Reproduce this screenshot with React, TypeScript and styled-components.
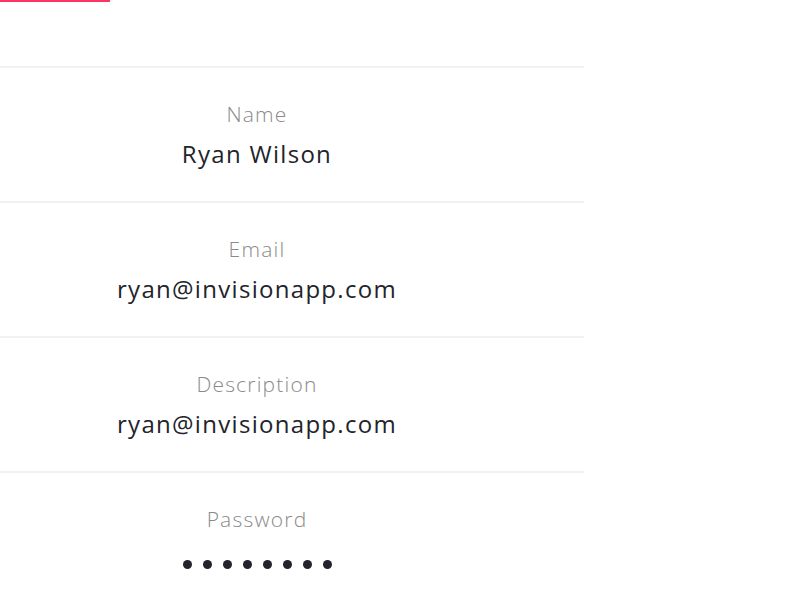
import React from "react";
import styled, { createGlobalStyle } from "styled-components";

const Global = createGlobalStyle`
  html, body { margin: 0; padding: 0; background: #ffffff; }
  body { font-family: "Open Sans", "Noto Sans", sans-serif; overflow: hidden; }
`;

const Page = styled.div`
  width: 800px;
  height: 600px;
  overflow: hidden;
  background: #fff;
`;

const Panel = styled.div`
  width: 654px;
  margin-left: -70px;
`;

const Header = styled.div`
  height: 66px;
  padding-left: 70px;
`;

const Progress = styled.div`
  width: 110px;
  height: 2px;
  background: #ff3366;
`;

const Row = styled.div`
  border-top: 2px solid #f1f1f1;
  height: 135px;
  box-sizing: border-box;
  display: flex;
  flex-direction: column;
  align-items: center;
  padding-top: 32px;
`;

const Label = styled.div`
  font-size: 21px;
  font-weight: 300;
  line-height: 28px;
  letter-spacing: 1.2px;
  color: #8a8a8a;
`;

const Value = styled.div`
  margin-top: 10px;
  font-size: 24px;
  line-height: 32px;
  letter-spacing: 1.3px;
  color: #23232b;
`;

const Dots = styled.div`
  margin-top: 27px;
  display: flex;
  gap: 11px;
`;

const Dot = styled.span`
  width: 9px;
  height: 9px;
  border-radius: 50%;
  background: #23232b;
`;

const fields = [
  { label: "Name", value: "Ryan Wilson" },
  { label: "Email", value: "ryan@invisionapp.com" },
  { label: "Description", value: "ryan@invisionapp.com" },
];

export default function App() {
  return (
    <Page>
      <Global />
      <Panel>
        <Header>
          <Progress />
        </Header>
        {fields.map((f) => (
          <Row key={f.label}>
            <Label>{f.label}</Label>
            <Value>{f.value}</Value>
          </Row>
        ))}
        <Row>
          <Label>Password</Label>
          <Dots>
            {Array.from({ length: 8 }).map((_, i) => (
              <Dot key={i} />
            ))}
          </Dots>
        </Row>
      </Panel>
    </Page>
  );
}
